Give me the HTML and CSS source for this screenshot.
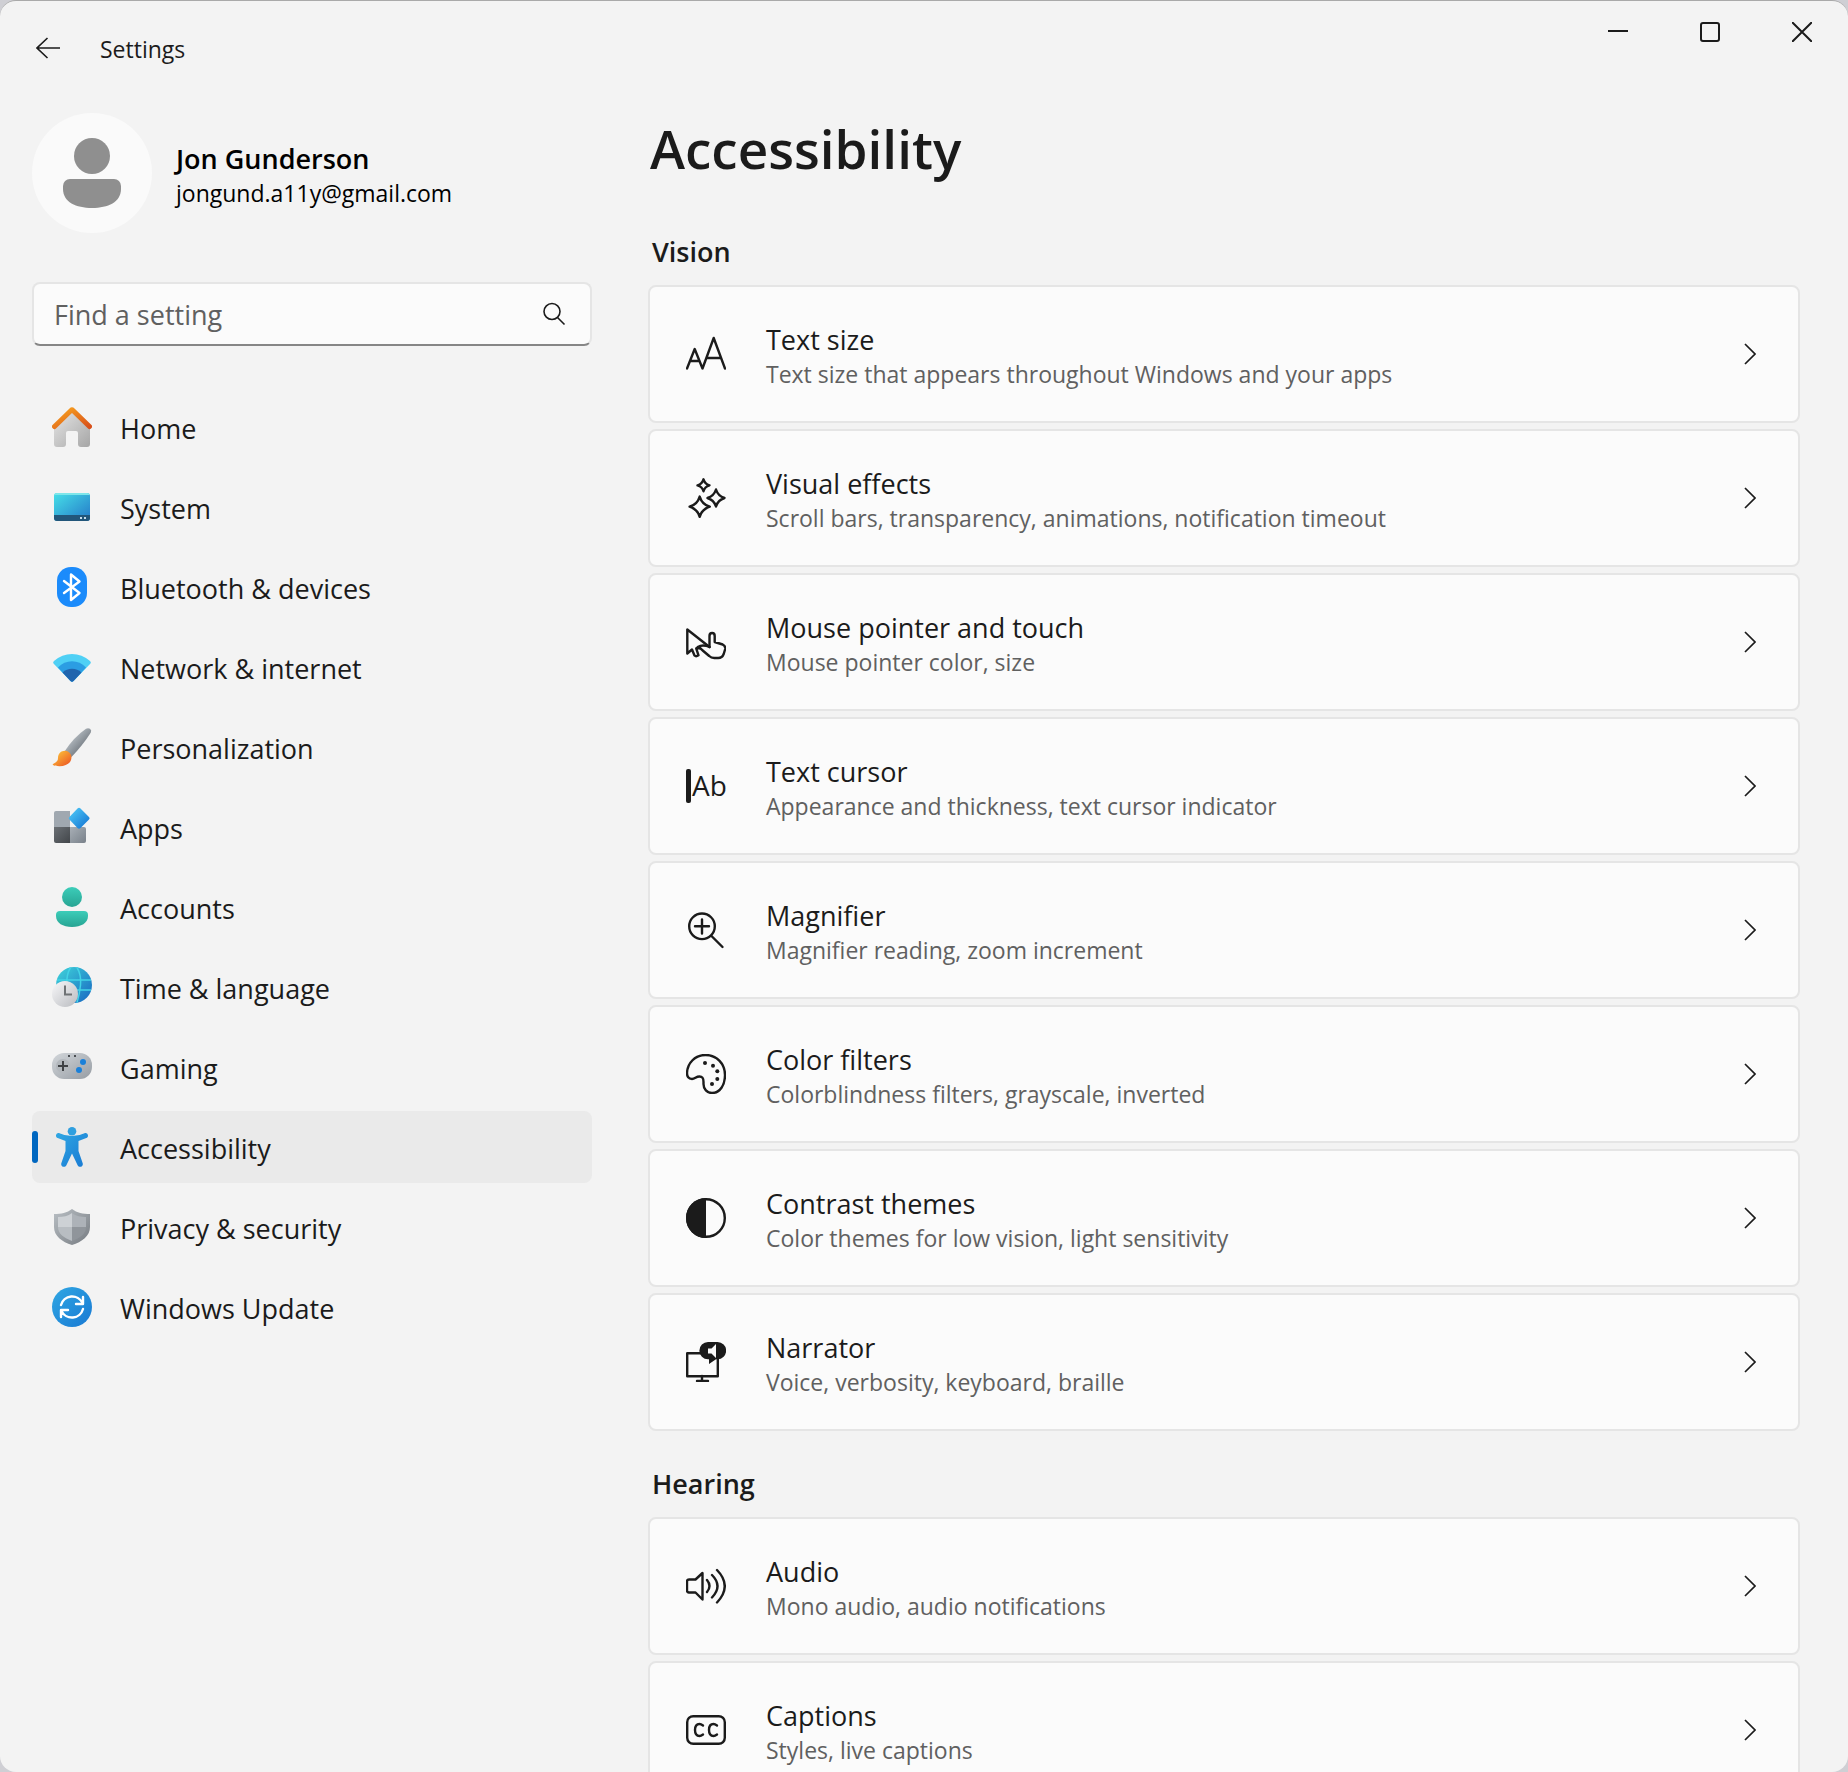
FILE: index.html
```html
<!DOCTYPE html>
<html lang="en">
<head>
<meta charset="utf-8">
<meta name="viewport" content="width=device-width, initial-scale=1">
<title>Settings</title>
<link rel="stylesheet" href="styles.css">
</head>
<body>
<div class="window">
  <header class="titlebar">
    <button class="back" type="button" aria-label="Back">
      <svg width="24" height="22" viewBox="0 0 24 22" stroke-width="1.600"><path d="M24 11H1M11.500 1L1 11l10.500 10"/></svg>
    </button>
    <span class="app-name">Settings</span>
    <div class="caption-buttons">
      <button type="button" aria-label="Minimize"><svg width="20" height="20" viewBox="0 0 20 20" stroke-width="2"><path d="M0 9h20"/></svg></button>
      <button type="button" aria-label="Maximize"><svg width="20" height="20" viewBox="0 0 20 20" stroke-width="2"><rect x="1" y="1" width="18" height="18" rx="2"/></svg></button>
      <button type="button" aria-label="Close"><svg width="20" height="20" viewBox="0 0 20 20" stroke-width="2"><path d="M0 0l20 20M20 0L0 20"/></svg></button>
    </div>
  </header>

  <div class="body">
    <aside class="sidebar">
      <a class="profile" href="#profile">
        <svg class="avatar" width="120" height="120" viewBox="0 0 120 120">
          <circle cx="60" cy="60" r="60" fill="#fafafa"/>
          <circle cx="60" cy="43" r="18" fill="#8f8f8f"/>
          <path d="M38 66h44a7 7 0 0 1 7 7v3c0 13-13 19-29 19s-29-6-29-19v-3a7 7 0 0 1 7-7z" fill="#8f8f8f"/>
        </svg>
        <span class="profile-text">
          <strong class="profile-name">Jon Gunderson</strong>
          <span class="profile-mail">jongund.a11y@gmail.com</span>
        </span>
      </a>

      <form class="search" role="search">
        <input class="search-input" type="text" placeholder="Find a setting" aria-label="Find a setting">
        <svg class="search-icon" width="24" height="24" viewBox="0 0 24 24" stroke-width="1.600"><circle cx="10" cy="9.500" r="8"/><path d="M15.500 15.500l7 7"/></svg>
      </form>

      <nav class="nav" aria-label="Settings categories">
        <a class="nav-item" href="#home">
          <svg width="40" height="40" viewBox="0 0 40 40">
            <defs>
              <linearGradient id="g-house" x1="0" y1="0" x2="1" y2="1"><stop offset="0" stop-color="#e6e6e6"/><stop offset="1" stop-color="#a6a6a6"/></linearGradient>
              <linearGradient id="g-roof" x1="0" y1="0" x2="1" y2="1"><stop offset="0" stop-color="#f9a51f"/><stop offset="1" stop-color="#d8501a"/></linearGradient>
            </defs>
            <path d="M20 4l18 16v17a3 3 0 0 1-3 3h-6a3 3 0 0 1-3-3V26a2 2 0 0 0-2-2h-8a2 2 0 0 0-2 2v11a3 3 0 0 1-3 3H5a3 3 0 0 1-3-3V20z" fill="url(#g-house)"/>
            <path d="M2.500 19.500L19 3.500q1-1 2 0l16.500 16" fill="none" stroke="url(#g-roof)" stroke-width="5" stroke-linecap="round"/>
          </svg>
          <span class="nav-label">Home</span>
        </a>
        <a class="nav-item" href="#system">
          <svg width="40" height="40" viewBox="0 0 40 40">
            <defs><linearGradient id="g-screen" x1="0" y1="0" x2="1" y2="1"><stop offset="0" stop-color="#46e0e8"/><stop offset="1" stop-color="#2478c8"/></linearGradient></defs>
            <rect x="2" y="6" width="36" height="28" rx="3" fill="url(#g-screen)"/>
            <path d="M2 28h36v3a3 3 0 0 1-3 3H5a3 3 0 0 1-3-3z" fill="#22567a"/>
            <path d="M5 6h30a3 3 0 0 1 3 2H2a3 3 0 0 1 3-2z" fill="#7de6ea"/>
            <path d="M28 30h2v2h-2zM32 30h2v2h-2z" fill="#c5dceb"/>
          </svg>
          <span class="nav-label">System</span>
        </a>
        <a class="nav-item" href="#bluetooth">
          <svg width="40" height="40" viewBox="0 0 40 40">
            <rect x="5" width="30" height="40" rx="14" fill="#1b8bfb"/>
            <path d="M12 14l15.500 12L19 33V7.500l8.500 7L12 26" fill="none" stroke="#fff" stroke-width="2.400" stroke-linecap="round" stroke-linejoin="round"/>
          </svg>
          <span class="nav-label">Bluetooth &amp; devices</span>
        </a>
        <a class="nav-item" href="#network">
          <svg width="40" height="40" viewBox="0 0 40 40">
            <path d="M1.500 16.500q-1-1.500.5-2.500Q10 7 20 7t18 7q1.500 1 .5 2.500L21.500 34q-1.500 1.500-3 0z" fill="#4fd0f5"/>
            <path d="M6 20.500Q12 14.300 20 14.300T34 20.500L21.500 34q-1.500 1.500-3 0z" fill="#2b9de3"/>
            <path d="M10.500 25.500Q14.500 21.800 20 21.800t9.500 3.700l-8 8.500q-1.500 1.500-3 0z" fill="#2064ae"/>
          </svg>
          <span class="nav-label">Network &amp; internet</span>
        </a>
        <a class="nav-item" href="#personalization">
          <svg width="40" height="40" viewBox="0 0 40 40">
            <defs>
              <linearGradient id="g-handle" x1="0" y1="0" x2="1" y2="1"><stop offset=".3" stop-color="#b3bac0"/><stop offset=".7" stop-color="#747b82"/></linearGradient>
              <linearGradient id="g-brush" x1="0" y1="0" x2="1" y2="1"><stop offset=".1" stop-color="#fdc53a"/><stop offset=".9" stop-color="#ec5a24"/></linearGradient>
            </defs>
            <path d="M12.500 24.500Q22 10 34 1.800q2-1.300 4 0 2 1.700.7 4Q31 18 19.500 30z" fill="url(#g-handle)"/>
            <path d="M6 31c0-4.500 3-7.300 7-7.300 3.500 0 6.500 3 6.500 6.500 0 5.500-5 9-12 9-3 0-5.500-.4-6.500-1.200-.6-.6-.1-1 .5-1.300C4.500 35 6 34 6 31z" fill="url(#g-brush)"/>
          </svg>
          <span class="nav-label">Personalization</span>
        </a>
        <a class="nav-item" href="#apps">
          <svg width="40" height="40" viewBox="0 0 40 40">
            <defs>
              <linearGradient id="g-tile" x1="0" y1="0" x2="1" y2="1"><stop offset="0" stop-color="#a8afb6"/><stop offset="1" stop-color="#79818a"/></linearGradient>
              <linearGradient id="g-dark" x1="0" y1="0" x2="1" y2="1"><stop offset="0" stop-color="#6b7075"/><stop offset="1" stop-color="#42464a"/></linearGradient>
              <linearGradient id="g-diamond" x1="0" y1="0" x2="1" y2="1"><stop offset=".1" stop-color="#4cc6f6"/><stop offset=".9" stop-color="#1778d4"/></linearGradient>
            </defs>
            <path d="M4 4h14v16H2V6a2 2 0 0 1 2-2z" fill="#a0a8b0"/>
            <path d="M2 20h16v16H4a2 2 0 0 1-2-2z" fill="url(#g-dark)"/>
            <path d="M18 20h14a2 2 0 0 1 2 2v12a2 2 0 0 1-2 2H18z" fill="url(#g-tile)"/>
            <path d="M25.500 1.500q1.500-1.500 3 0l8.500 8.500q1.300 1.300 0 2.600L28.500 21q-1.500 1.500-3 0L17.400 12.600q-1.300-1.300 0-2.600z" fill="url(#g-diamond)"/>
          </svg>
          <span class="nav-label">Apps</span>
        </a>
        <a class="nav-item" href="#accounts">
          <svg width="40" height="40" viewBox="0 0 40 40">
            <defs><linearGradient id="g-person" x1="0" y1="0" x2="0" y2="1"><stop offset="0" stop-color="#3ccdb9"/><stop offset="1" stop-color="#27a493"/></linearGradient></defs>
            <circle cx="20" cy="10" r="10" fill="url(#g-person)"/>
            <path d="M8 24h24a4 4 0 0 1 4 4v1c0 7-7 11-16 11S4 36 4 29v-1a4 4 0 0 1 4-4z" fill="url(#g-person)"/>
          </svg>
          <span class="nav-label">Accounts</span>
        </a>
        <a class="nav-item" href="#time">
          <svg width="40" height="40" viewBox="0 0 40 40">
            <defs>
              <linearGradient id="g-globe" x1="0" y1="0" x2="1" y2="1"><stop offset=".1" stop-color="#3ccbd8"/><stop offset=".9" stop-color="#1b70c4"/></linearGradient>
              <linearGradient id="g-clock" x1="0" y1="0" x2="1" y2="1"><stop offset=".1" stop-color="#f2f2f4"/><stop offset=".9" stop-color="#bfc1c5"/></linearGradient>
            </defs>
            <circle cx="22" cy="18" r="18" fill="url(#g-globe)"/>
            <path d="M5 13h34M5 23h34M18.500.5Q14 8 15 18t4 17M25 .5Q29.500 8 28.500 18T25 35.500" fill="none" stroke="#42d3e6" stroke-width="1.500"/>
            <circle cx="13" cy="27" r="13" fill="url(#g-clock)"/>
            <path d="M13 18.500V27.500h7" fill="none" stroke="#6f7275" stroke-width="2"/>
          </svg>
          <span class="nav-label">Time &amp; language</span>
        </a>
        <a class="nav-item" href="#gaming">
          <svg width="40" height="40" viewBox="0 0 40 40">
            <defs><linearGradient id="g-pad" x1="0" y1="0" x2="1" y2="1"><stop offset="0" stop-color="#d2d6da"/><stop offset="1" stop-color="#969ca3"/></linearGradient></defs>
            <rect y="6" width="40" height="26" rx="12" fill="url(#g-pad)"/>
            <circle cx="11" cy="19" r="7" fill="#b2b7bc"/>
            <path d="M11 14v10M6 19h10" stroke="#3f4245" stroke-width="2"/>
            <path d="M16 8h2v2h-2zM22 8h2v2h-2z" fill="#4b4f53"/>
            <circle cx="31" cy="15" r="3" fill="#1a80d9"/><circle cx="27" cy="23" r="3" fill="#1a80d9"/>
          </svg>
          <span class="nav-label">Gaming</span>
        </a>
        <a class="nav-item is-active" href="#accessibility" aria-current="page">
          <svg width="40" height="40" viewBox="0 0 40 40">
            <defs><linearGradient id="g-figure" x1="0" y1="0" x2="1" y2="1"><stop offset="0" stop-color="#30a7e3"/><stop offset="1" stop-color="#1879d3"/></linearGradient></defs>
            <circle cx="20" cy="4.300" r="4.300" fill="#2f9fdf"/>
            <path d="M7.500 6.200Q13 9 20 9t12.500-2.800c3.300-1 5 3.500 1.800 4.900L26.500 14v10l4.200 12.300c1 3.200-3.600 5-5.100 1.900L20 26.500l-5.600 11.700c-1.500 3.100-6.100 1.300-5.100-1.900L13.500 24V14l-7.800-2.900c-3.200-1.400-1.500-5.900 1.800-4.900z" fill="url(#g-figure)"/>
          </svg>
          <span class="nav-label">Accessibility</span>
        </a>
        <a class="nav-item" href="#privacy">
          <svg width="40" height="40" viewBox="0 0 40 40">
            <defs><linearGradient id="g-shield" x1="0" y1="0" x2="1" y2="1"><stop offset="0" stop-color="#b9bfc4"/><stop offset="1" stop-color="#767b81"/></linearGradient></defs>
            <path d="M20 2c5 4 11 5 18 5v13c0 9-8 15-18 18C10 35 2 29 2 20V7c7 0 13-1 18-5z" fill="url(#g-shield)"/>
            <path d="M20 6v14H6V10c5 0 10-1 14-4z" fill="#cdd1d5"/><path d="M20 6v14h14V10c-5 0-10-1-14-4z" fill="#adb2b8"/>
            <path d="M6 20h14v14C12 31 6 27 6 20z" fill="#b8bdc2"/><path d="M34 20H20v14c8-3 14-7 14-14z" fill="#90959b"/>
          </svg>
          <span class="nav-label">Privacy &amp; security</span>
        </a>
        <a class="nav-item" href="#update">
          <svg width="40" height="40" viewBox="0 0 40 40">
            <circle cx="20" cy="20" r="20" fill="url(#g-figure)"/>
            <path d="M9 18a11.500 11.500 0 0 1 21.500-2M31 22a11.500 11.500 0 0 1-21.500 2M31 10v7h-7M9 30v-7h7" fill="none" stroke="#fff" stroke-width="2.400" stroke-linecap="round" stroke-linejoin="round"/>
          </svg>
          <span class="nav-label">Windows Update</span>
        </a>
      </nav>
    </aside>

    <main class="content">
      <h1 class="page-title">Accessibility</h1>

      <section class="group">
        <h2 class="group-title">Vision</h2>
        <a class="card" href="#text-size">
          <svg class="card-icon" width="40" height="40" viewBox="0 0 40 40" stroke-width="2.400"><path d="M1 34.500L8.700 15l7.800 19.500L27.700 4 39 34.500M4 27h9.500M20.500 24h14"/></svg>
          <span class="card-text"><span class="card-title">Text size</span><span class="card-note">Text size that appears throughout Windows and your apps</span></span>
          <svg class="chevron" width="12" height="22" viewBox="0 0 12 22" stroke-width="1.700"><path d="M1 1l10 10L1 21"/></svg>
        </a>
        <a class="card" href="#visual-effects">
          <svg class="card-icon" width="40" height="40" viewBox="0 0 40 40" stroke-width="2.400"><path d="M17.500 1.300q1.200 4.800 6 6-4.800 1.200-6 6-1.200-4.800-6-6 4.800-1.200 6-6zM30 11.500q2 6.500 8.500 8.500-6.500 2-8.500 8.500-2-6.500-8.500-8.500 6.500-2 8.500-8.500zM13.700 18.600q2.300 7.800 10.100 10.100-7.800 2.300-10.100 10.100-2.300-7.800-10.100-10.100 7.800-2.300 10.100-10.100z"/></svg>
          <span class="card-text"><span class="card-title">Visual effects</span><span class="card-note">Scroll bars, transparency, animations, notification timeout</span></span>
          <svg class="chevron" width="12" height="22" viewBox="0 0 12 22" stroke-width="1.700"><path d="M1 1l10 10L1 21"/></svg>
        </a>
        <a class="card" href="#mouse">
          <svg class="card-icon" width="40" height="40" viewBox="0 0 40 40" stroke-width="2.400"><path d="M23.500 25L1.300 7.500V31.500l4.700-4 2.500 6q1.500 1.500 4-.2l-2.300-7H14"/><path d="M23.500 25V14q0-3 2.600-3t2.600 3v6l8 2.500q3 1.500 2.500 4.500l-1.500 5q-1.500 4-5.500 4h-4q-3 0-5-2l-6.500-5.500q-2.500-3-5-3.500 5-3 12 0z"/></svg>
          <span class="card-text"><span class="card-title">Mouse pointer and touch</span><span class="card-note">Mouse pointer color, size</span></span>
          <svg class="chevron" width="12" height="22" viewBox="0 0 12 22" stroke-width="1.700"><path d="M1 1l10 10L1 21"/></svg>
        </a>
        <a class="card" href="#text-cursor">
          <svg class="card-icon" width="40" height="40" viewBox="0 0 40 40" stroke-width="2.400"><rect class="solid" y="3" width="5" height="34" rx="2"/><text class="icon-letters" x="6" y="30">Ab</text></svg>
          <span class="card-text"><span class="card-title">Text cursor</span><span class="card-note">Appearance and thickness, text cursor indicator</span></span>
          <svg class="chevron" width="12" height="22" viewBox="0 0 12 22" stroke-width="1.700"><path d="M1 1l10 10L1 21"/></svg>
        </a>
        <a class="card" href="#magnifier">
          <svg class="card-icon" width="40" height="40" viewBox="0 0 40 40" stroke-width="2.400"><circle cx="16" cy="16.300" r="12.800"/><path d="M25.500 26L36.500 37M16 9.500v14M9 16.300h14"/></svg>
          <span class="card-text"><span class="card-title">Magnifier</span><span class="card-note">Magnifier reading, zoom increment</span></span>
          <svg class="chevron" width="12" height="22" viewBox="0 0 12 22" stroke-width="1.700"><path d="M1 1l10 10L1 21"/></svg>
        </a>
        <a class="card" href="#color-filters">
          <svg class="card-icon" width="40" height="40" viewBox="0 0 40 40" stroke-width="2.400"><path d="M1 19C1.500 9 9 1 19.500 1 31 1 39 10 39 21c0 10-5 18-13 18-5 0-8.500-4-8.500-9v-2c0-4-1-5.500-4-5.500-3.500 0-4.500 2.500-7.500 2.500-3.500 0-5-2.500-5-6z"/><g class="solid"><circle cx="19" cy="9" r="2"/><circle cx="27" cy="11.700" r="2"/><circle cx="31.300" cy="17.300" r="2"/><circle cx="31.300" cy="25" r="2"/><circle cx="26" cy="30" r="2"/></g></svg>
          <span class="card-text"><span class="card-title">Color filters</span><span class="card-note">Colorblindness filters, grayscale, inverted</span></span>
          <svg class="chevron" width="12" height="22" viewBox="0 0 12 22" stroke-width="1.700"><path d="M1 1l10 10L1 21"/></svg>
        </a>
        <a class="card" href="#contrast">
          <svg class="card-icon" width="40" height="40" viewBox="0 0 40 40" stroke-width="2.400"><circle cx="20" cy="20" r="18.800"/><path class="solid" d="M20 0v40a20 20 0 0 1 0-40z"/></svg>
          <span class="card-text"><span class="card-title">Contrast themes</span><span class="card-note">Color themes for low vision, light sensitivity</span></span>
          <svg class="chevron" width="12" height="22" viewBox="0 0 12 22" stroke-width="1.700"><path d="M1 1l10 10L1 21"/></svg>
        </a>
        <a class="card" href="#narrator">
          <svg class="card-icon" width="40" height="40" viewBox="0 0 40 40" stroke-width="2.400"><path d="M14 11.200H1.200v23h30.600V16M16 34v5M11 39h11"/><path class="solid" d="M22 0h9.500a8.600 8.600 0 0 1 0 17.300H30L23 22v-4.700h-1A8.600 8.600 0 0 1 22 0z"/><path class="cutout" d="M22 6.500h3.500L30 2v14l-4.500-4.500H22z"/></svg>
          <span class="card-text"><span class="card-title">Narrator</span><span class="card-note">Voice, verbosity, keyboard, braille</span></span>
          <svg class="chevron" width="12" height="22" viewBox="0 0 12 22" stroke-width="1.700"><path d="M1 1l10 10L1 21"/></svg>
        </a>
      </section>

      <section class="group">
        <h2 class="group-title">Hearing</h2>
        <a class="card" href="#audio">
          <svg class="card-icon" width="40" height="40" viewBox="0 0 40 40" stroke-width="2.400"><path d="M16.500 7v26.500L9.500 26.500H3q-2 0-2-2v-9q0-2 2-2h6.500zM21 14q5 6 0 12M26 9q11 11 0 22.500M31 4q15.500 16 0 32.500"/></svg>
          <span class="card-text"><span class="card-title">Audio</span><span class="card-note">Mono audio, audio notifications</span></span>
          <svg class="chevron" width="12" height="22" viewBox="0 0 12 22" stroke-width="1.700"><path d="M1 1l10 10L1 21"/></svg>
        </a>
        <a class="card" href="#captions">
          <svg class="card-icon" width="40" height="40" viewBox="0 0 40 40" stroke-width="2.400"><rect x="1.200" y="6.200" width="37.600" height="27.600" rx="6"/><path d="M17 15.500q-2-1.500-3.500-1.500-4.500 0-4.500 6t4.500 6q1.500 0 3.500-1.500M31 15.500q-2-1.500-3.500-1.500-4.500 0-4.500 6t4.500 6q1.500 0 3.500-1.500"/></svg>
          <span class="card-text"><span class="card-title">Captions</span><span class="card-note">Styles, live captions</span></span>
          <svg class="chevron" width="12" height="22" viewBox="0 0 12 22" stroke-width="1.700"><path d="M1 1l10 10L1 21"/></svg>
        </a>
      </section>
    </main>
  </div>
</div>
</body>
</html>
```
FILE: styles.css
```css
:root {
  --ink: #1b1b1b;
  --muted: #606060;
  --line: #e5e5e5;
  --surface: #fbfbfb;
  --page: #f3f3f3;
}

* {
  box-sizing: border-box;
}

body {
  margin: 0;
  background: #cfcfd4;
  color: var(--ink);
  font-family: "Open Sans", "Noto Sans", sans-serif;
  font-size: 27px;
  line-height: 36px;
}

a {
  color: inherit;
  text-decoration: none;
}

button {
  border: 0;
  padding: 0;
  background: none;
  display: flex;
  align-items: center;
  justify-content: center;
}

svg {
  flex: none;
}

.window {
  height: 100vh;
  display: flex;
  flex-direction: column;
  overflow: hidden;
  background: var(--page);
  border-top: 1px solid #a9a9a9;
  border-radius: 16px;
}

/* Title bar */

.titlebar {
  display: flex;
  align-items: flex-start;
  height: 95px;
  flex: none;
}

.back {
  width: 96px;
  height: 94px;
}

.back svg,
.caption-buttons svg {
  fill: none;
  stroke: var(--ink);
}

.app-name {
  padding: 30px 4px;
  font-size: 23px;
}

.caption-buttons {
  display: flex;
  margin-left: auto;
}

.caption-buttons button {
  width: 92px;
  height: 62px;
}

/* Layout */

.body {
  flex: 1;
  min-height: 0;
  display: grid;
  grid-template-columns: 560px 1fr;
  gap: 56px;
  padding: 0 48px 0 32px;
}

/* Sidebar */

.profile {
  display: flex;
  align-items: center;
  gap: 24px;
  margin-top: 17px;
  color: #000;
}

.profile-text {
  display: flex;
  flex-direction: column;
  padding-top: 4px;
}

.profile-name {
  font-weight: 600;
}

.profile-mail {
  font-size: 23px;
  line-height: 32px;
}

.search {
  display: flex;
  align-items: center;
  height: 64px;
  margin-top: 49px;
  padding: 0 24px 0 20px;
  background: var(--surface);
  border: 2px solid var(--line);
  border-bottom-color: #868686;
  border-radius: 8px;
}

.search-input {
  flex: 1;
  min-width: 0;
  padding: 2px 0 0;
  border: 0;
  outline: 0;
  background: none;
  font: inherit;
  color: inherit;
}

.search-input::placeholder {
  color: var(--muted);
  opacity: 1;
}

.search-icon {
  fill: none;
  stroke: var(--ink);
}

.nav {
  display: flex;
  flex-direction: column;
  gap: 8px;
  margin-top: 45px;
}

.nav-item {
  display: flex;
  align-items: center;
  gap: 28px;
  height: 72px;
  padding-left: 20px;
  border-radius: 8px;
}

.nav-label {
  padding-top: 3px;
}

.nav-item.is-active {
  position: relative;
  background: #eaeaea;
}

.nav-item.is-active::before {
  content: "";
  position: absolute;
  left: 0;
  top: 20px;
  width: 6px;
  height: 32px;
  border-radius: 3px;
  background: #0067c0;
}

/* Content */

.content {
  overflow-y: auto;
  scrollbar-width: none;
}

.page-title {
  margin: 15px 0 0 2px;
  font-size: 53px;
  font-weight: 600;
  line-height: 76px;
}

.group {
  display: flex;
  flex-direction: column;
  gap: 6px;
  padding-top: 47px;
}

.group + .group {
  padding-top: 35px;
}

.group-title {
  margin: 0 0 9px 4px;
  font-size: 27px;
  font-weight: 600;
  line-height: 36px;
}

.card {
  display: flex;
  align-items: center;
  gap: 40px;
  height: 138px;
  padding: 0 42px 0 36px;
  background: var(--surface);
  border: 2px solid var(--line);
  border-radius: 8px;
}

.card-icon {
  fill: none;
  stroke: var(--ink);
  stroke-linecap: round;
  stroke-linejoin: round;
}

.card-icon .solid {
  fill: var(--ink);
  stroke: none;
}

.card-icon .cutout {
  fill: var(--surface);
  stroke: none;
}

.card-icon .icon-letters {
  fill: var(--ink);
  stroke: none;
  font-size: 28px;
}

.card-text {
  flex: 1;
  display: flex;
  flex-direction: column;
  padding-top: 4px;
}

.card-note {
  font-size: 23px;
  line-height: 32px;
  color: var(--muted);
}

.chevron {
  fill: none;
  stroke: var(--ink);
}
```
